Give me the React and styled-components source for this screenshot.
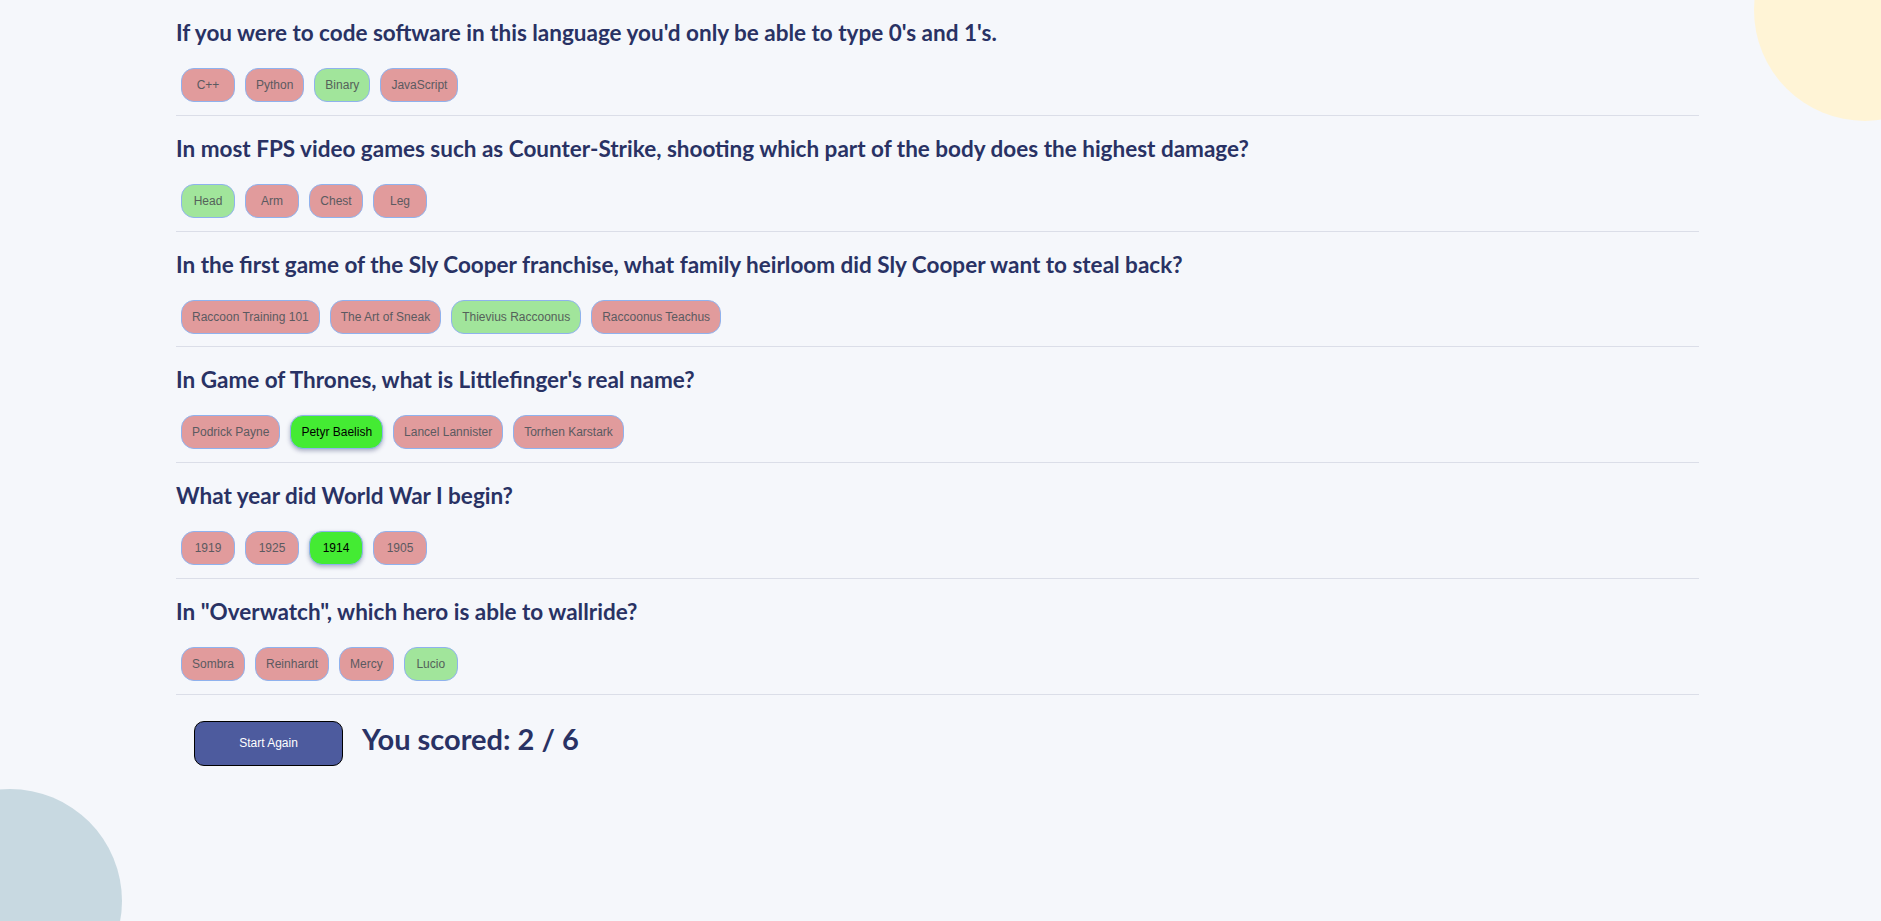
import React from "react";
import styled, { createGlobalStyle } from "styled-components";

const GlobalStyle = createGlobalStyle`
  html, body {
    margin: 0;
    padding: 0;
    background: #f5f7fb;
  }
  body {
    font-family: "Lato", "Liberation Sans", sans-serif;
    color: #293264;
    overflow: hidden;
  }
`;

const questions = [
  {
    question: "If you were to code software in this language you'd only be able to type 0's and 1's.",
    answers: ["C++", "Python", "Binary", "JavaScript"],
    correct: "Binary",
    picked: "C++",
  },
  {
    question: "In most FPS video games such as Counter-Strike, shooting which part of the body does the highest damage?",
    answers: ["Head", "Arm", "Chest", "Leg"],
    correct: "Head",
    picked: "Arm",
  },
  {
    question: "In the first game of the Sly Cooper franchise, what family heirloom did Sly Cooper want to steal back?",
    answers: ["Raccoon Training 101", "The Art of Sneak", "Thievius Raccoonus", "Raccoonus Teachus"],
    correct: "Thievius Raccoonus",
    picked: "The Art of Sneak",
  },
  {
    question: "In Game of Thrones, what is Littlefinger's real name?",
    answers: ["Podrick Payne", "Petyr Baelish", "Lancel Lannister", "Torrhen Karstark"],
    correct: "Petyr Baelish",
    picked: "Petyr Baelish",
  },
  {
    question: "What year did World War I begin?",
    answers: ["1919", "1925", "1914", "1905"],
    correct: "1914",
    picked: "1914",
  },
  {
    question: 'In "Overwatch", which hero is able to wallride?',
    answers: ["Sombra", "Reinhardt", "Mercy", "Lucio"],
    correct: "Lucio",
    picked: "Mercy",
  },
];

function answerState(q, a) {
  if (a === q.correct && a === q.picked) return "hit";
  if (a === q.correct) return "right";
  return "wrong";
}

export default function App() {
  const score = questions.filter((q) => q.picked === q.correct).length;
  return (
    <Page>
      <GlobalStyle />
      <BlobTop />
      <BlobBottom />
      <Quiz>
        {questions.map((q) => (
          <Question key={q.question}>
            <Title>{q.question}</Title>
            <Answers>
              {q.answers.map((a) => (
                <Answer key={a} $state={answerState(q, a)}>
                  {a}
                </Answer>
              ))}
            </Answers>
          </Question>
        ))}
        <Footer>
          <AgainButton>Start Again</AgainButton>
          <Score>
            You scored: {score} / {questions.length}
          </Score>
        </Footer>
      </Quiz>
    </Page>
  );
}

const Page = styled.main`
  position: relative;
  min-height: 921px;
  overflow: hidden;
`;

const BlobTop = styled.div`
  position: fixed;
  width: 222px;
  height: 222px;
  border-radius: 50%;
  background: #fff4d6;
  left: 1754px;
  top: -101px;
  z-index: 0;
`;

const BlobBottom = styled.div`
  position: fixed;
  width: 224px;
  height: 224px;
  border-radius: 50%;
  background: #c8d9e1;
  left: -102px;
  top: 789px;
  z-index: 0;
`;

const Quiz = styled.div`
  position: relative;
  z-index: 1;
  width: 1523px;
  margin-left: 176px;
`;

const Question = styled.section`
  padding: 20px 0 12.75px;
  border-bottom: 1px solid #dbdee8;
`;

const Title = styled.h2`
  margin: 0;
  font-size: 22.5px;
  line-height: 25px;
  font-weight: 700;
  color: #293264;
`;

const Answers = styled.div`
  display: flex;
  margin-top: 23px;
`;

const palette = {
  wrong: { bg: "#e19b9c", fg: "#5b5a60", shadow: "none" },
  right: { bg: "#a1e59b", fg: "#55615a", shadow: "none" },
  hit: { bg: "#44eb33", fg: "#000000", shadow: "0 2px 4px rgba(41, 50, 100, 0.35)" },
};

const Answer = styled.button`
  display: flex;
  align-items: center;
  justify-content: center;
  height: 34px;
  min-width: 54px;
  margin: 0 5px;
  padding: 0 10px;
  border: 1px solid #8fb2ee;
  border-radius: 13px;
  font-family: "Liberation Sans", Arial, sans-serif;
  font-size: 12px;
  background: ${(p) => palette[p.$state].bg};
  color: ${(p) => palette[p.$state].fg};
  box-shadow: ${(p) => palette[p.$state].shadow};
  cursor: pointer;
`;

const Footer = styled.div`
  display: flex;
  align-items: center;
  padding: 26px 0 0 18px;
`;

const AgainButton = styled.button`
  width: 149px;
  height: 45px;
  border: 1px solid #000;
  border-radius: 10px;
  background: #4d5b9e;
  color: #fff;
  font-family: "Liberation Sans", Arial, sans-serif;
  font-size: 12px;
  cursor: pointer;
`;

const Score = styled.p`
  margin: 0 0 10px 19px;
  font-size: 29px;
  font-weight: 700;
  color: #293264;
`;
